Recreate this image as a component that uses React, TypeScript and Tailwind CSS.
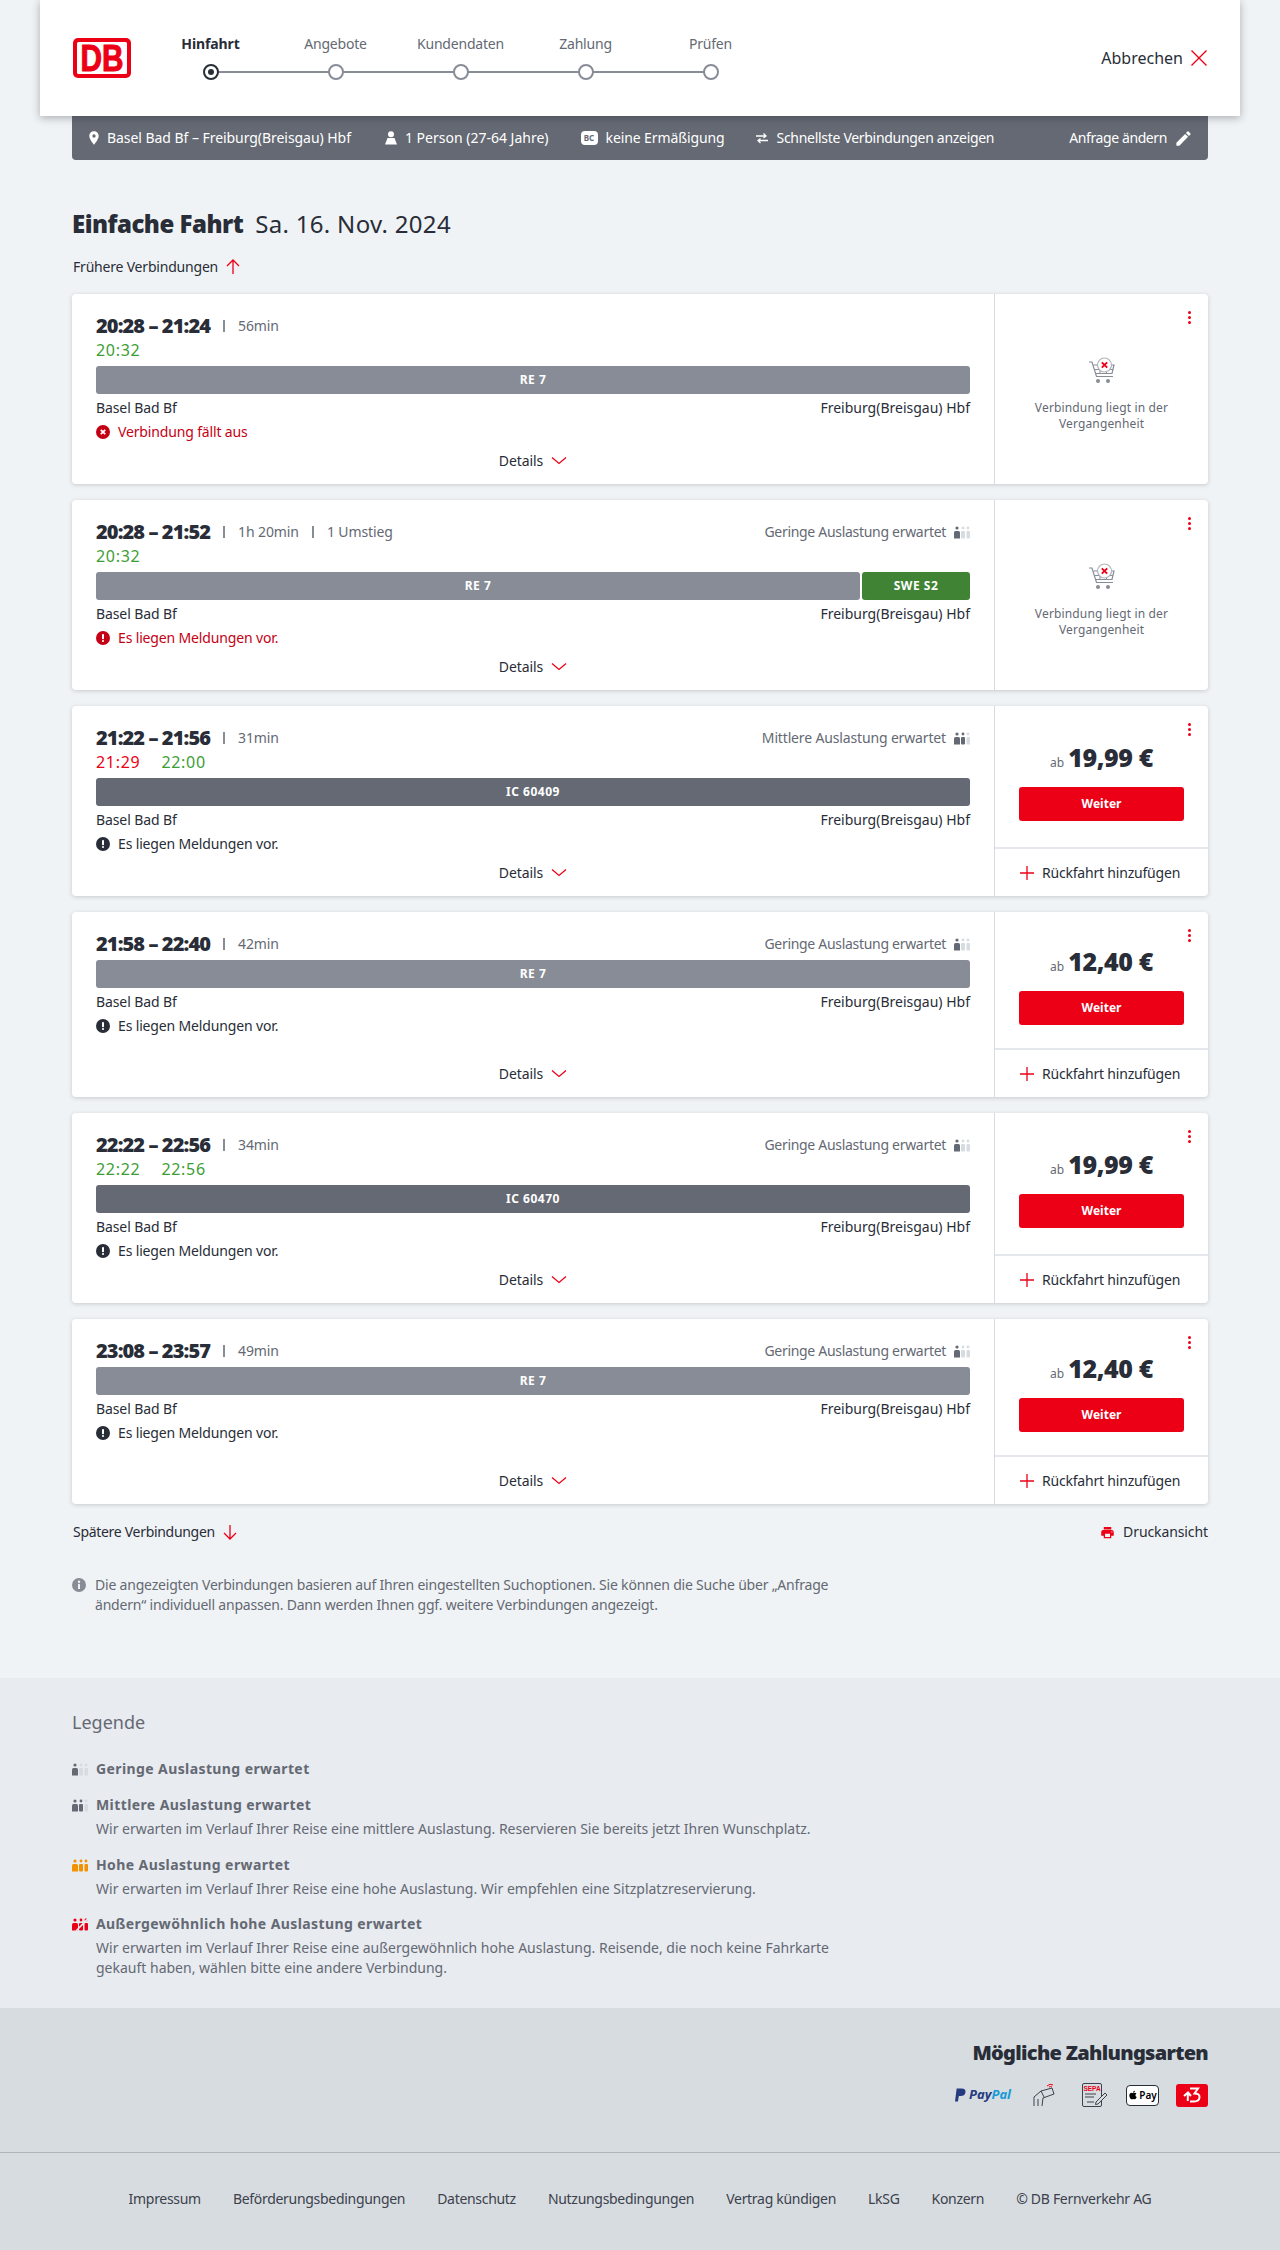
import { MdEdit, MdLocationOn, MdPrint } from "react-icons/md";
import { FaApple } from "react-icons/fa";

const steps = ["Hinfahrt", "Angebote", "Kundendaten", "Zahlung", "Prüfen"];

const footerLinks = [
  "Impressum",
  "Beförderungsbedingungen",
  "Datenschutz",
  "Nutzungsbedingungen",
  "Vertrag kündigen",
  "LkSG",
  "Konzern",
  "© DB Fernverkehr AG",
];

type Trip = {
  time: string;
  duration: string;
  change?: string;
  delays?: { text: string; late?: boolean }[];
  load?: "Geringe" | "Mittlere";
  segments: { name: string; tone: string; width: string }[];
  message: string;
  alert?: "cancel" | "warn";
  price?: string;
  short?: boolean;
};

const trips: Trip[] = [
  {
    time: "20:28 – 21:24",
    duration: "56min",
    delays: [{ text: "20:32" }],
    segments: [{ name: "RE 7", tone: "bg-[#878c96]", width: "flex-1" }],
    message: "Verbindung fällt aus",
    alert: "cancel",
  },
  {
    time: "20:28 – 21:52",
    duration: "1h 20min",
    change: "1 Umstieg",
    delays: [{ text: "20:32" }],
    load: "Geringe",
    segments: [
      { name: "RE 7", tone: "bg-[#878c96]", width: "flex-1" },
      { name: "SWE S2", tone: "bg-[#408335]", width: "w-[108px]" },
    ],
    message: "Es liegen Meldungen vor.",
    alert: "warn",
  },
  {
    time: "21:22 – 21:56",
    duration: "31min",
    delays: [{ text: "21:29", late: true }, { text: "22:00" }],
    load: "Mittlere",
    segments: [{ name: "IC 60409", tone: "bg-[#646973]", width: "flex-1" }],
    message: "Es liegen Meldungen vor.",
    price: "19,99 €",
  },
  {
    time: "21:58 – 22:40",
    duration: "42min",
    load: "Geringe",
    segments: [{ name: "RE 7", tone: "bg-[#878c96]", width: "flex-1" }],
    message: "Es liegen Meldungen vor.",
    price: "12,40 €",
    short: true,
  },
  {
    time: "22:22 – 22:56",
    duration: "34min",
    delays: [{ text: "22:22" }, { text: "22:56" }],
    load: "Geringe",
    segments: [{ name: "IC 60470", tone: "bg-[#646973]", width: "flex-1" }],
    message: "Es liegen Meldungen vor.",
    price: "19,99 €",
  },
  {
    time: "23:08 – 23:57",
    duration: "49min",
    load: "Geringe",
    segments: [{ name: "RE 7", tone: "bg-[#878c96]", width: "flex-1" }],
    message: "Es liegen Meldungen vor.",
    price: "12,40 €",
    short: true,
  },
];

function LoadIcon({ colors, slash }: { colors: string[]; slash?: boolean }) {
  return (
    <svg width="16" height="13" viewBox="0 0 16 13" className="shrink-0">
      <circle cx="3" cy="2" r="1.6" fill={colors[0]} />
      <path d="M0 6.5 Q0 5 1.5 5 H4.5 Q6 5 6 6.5 V12.5 H0 Z" fill={colors[0]} />
      <circle cx="9" cy="2" r="1.4" fill={colors[1]} />
      <rect x="7" y="5" width="4" height="7.5" rx="1" fill={colors[1]} />
      <circle cx="14" cy="2" r="1.4" fill={colors[2]} />
      <rect x="12.5" y="5" width="3.5" height="7.5" rx="1" fill={colors[2]} />
      {slash && <path d="M4 13 L15.5 1" stroke="#e8ebf0" strokeWidth="1.6" />}
    </svg>
  );
}

const loadColors = {
  Geringe: ["#646973", "#d7dce1", "#d7dce1"],
  Mittlere: ["#646973", "#646973", "#d7dce1"],
  Hohe: ["#f39200", "#f39200", "#f39200"],
  Hoch: ["#ec0016", "#ec0016", "#ec0016"],
};

function CartIcon() {
  return (
    <svg width="28" height="28" viewBox="0 0 28 28" fill="none" className="shrink-0">
      <path d="M1 5 H4 L8.5 19.5 H25" stroke="#878c96" strokeWidth="1.2" />
      <path d="M5.5 8 H26 L24 16.5 H8" stroke="#878c96" strokeWidth="1.2" />
      <path d="M7 12.5 H25 M12 8 V16.5 M18.5 8 V16.5" stroke="#878c96" strokeWidth="1" />
      <circle cx="10" cy="24" r="2" fill="#878c96" />
      <circle cx="20" cy="24" r="2" fill="#878c96" />
      <circle cx="16.5" cy="8" r="7" fill="#fff" stroke="#afb4bb" strokeWidth="1.2" />
      <path d="M13.8 5.3 L19.2 10.7 M19.2 5.3 L13.8 10.7" stroke="#ec0016" strokeWidth="1.8" />
    </svg>
  );
}

function AlertIcon({ kind, color }: { kind: "cancel" | "warn"; color: string }) {
  return (
    <svg width="14" height="14" viewBox="0 0 14 14" className="shrink-0">
      <circle cx="7" cy="7" r="7" fill={color} />
      {kind === "cancel" ? (
        <path d="M4.8 4.8 L9.2 9.2 M9.2 4.8 L4.8 9.2" stroke="#fff" strokeWidth="1.8" />
      ) : (
        <>
          <rect x="6" y="3" width="2" height="5.2" rx="0.8" fill="#fff" />
          <circle cx="7" cy="10" r="1.1" fill="#fff" />
        </>
      )}
    </svg>
  );
}

function Chevron() {
  return (
    <svg width="16" height="16" viewBox="0 0 16 16" fill="none" className="shrink-0">
      <path d="M1 4.5 L8 10.5 L15 4.5" stroke="#ec0016" strokeWidth="1.3" />
    </svg>
  );
}

function Arrow({ up }: { up?: boolean }) {
  return (
    <svg width="14" height="16" viewBox="0 0 14 16" fill="none" className="shrink-0">
      {up ? (
        <path d="M7 15 V1 M1 7 L7 1 L13 7" stroke="#ec0016" strokeWidth="1.3" />
      ) : (
        <path d="M7 1 V15 M1 9 L7 15 L13 9" stroke="#ec0016" strokeWidth="1.3" />
      )}
    </svg>
  );
}

function TripCard({ trip }: { trip: Trip }) {
  const failed = trip.alert != null;
  return (
    <div
      className={`relative flex bg-white rounded shadow-[0_1px_4px_rgba(40,45,55,0.2)] ${
        trip.short ? "h-[185px]" : "h-[190px]"
      }`}
    >
      <div className="flex flex-col w-[923px] shrink-0 px-6 pt-4 pb-[13px] border-r border-[#d7dce1]">
        <div className="flex items-center h-8 text-sm tracking-[-0.1px] text-[#646973]">
          <span className="font-black text-xl tracking-[-0.9px] text-[#282d37]">{trip.time}</span>
          <span className="w-0.5 h-3 bg-[#878c96] mx-[13px]" />
          <span>{trip.duration}</span>
          {trip.change && (
            <>
              <span className="w-0.5 h-3 bg-[#878c96] mx-[13px]" />
              <span>{trip.change}</span>
            </>
          )}
          {trip.load && (
            <span className={`ml-auto flex items-center gap-2 ${trip.load === "Mittlere" ? "tracking-[-0.15px]" : "tracking-[-0.3px]"}`}>
              {trip.load} Auslastung erwartet
              <LoadIcon colors={loadColors[trip.load]} />
            </span>
          )}
        </div>
        {trip.delays && (
          <div className="flex gap-[21px] h-6 pb-2 leading-4 text-base tracking-[0.7px]">
            {trip.delays.map((d) => (
              <span key={d.text} className={d.late ? "text-[#ec0016]" : "text-[#3c9e35]"}>
                {d.text}
              </span>
            ))}
          </div>
        )}
        <div className="flex gap-0.5 h-7">
          {trip.segments.map((s) => (
            <div
              key={s.name}
              className={`${s.width} ${s.tone} rounded-[3px] flex items-center justify-center text-xs font-bold text-white tracking-[0.5px]`}
            >
              {s.name}
            </div>
          ))}
        </div>
        <div className="flex justify-between items-center h-7 text-sm text-[#282d37]">
          <span className="tracking-[-0.1px]">Basel Bad Bf</span>
          <span>Freiburg(Breisgau) Hbf</span>
        </div>
        <div
          className={`flex items-center gap-2 h-5 text-sm tracking-[-0.15px] ${failed ? "text-[#c50014]" : "text-[#282d37]"}`}
        >
          <AlertIcon kind={trip.alert === "cancel" ? "cancel" : "warn"} color={failed ? "#c50014" : "#282d37"} />
          {trip.message}
        </div>
        <div className="mt-auto flex items-center justify-center gap-2 h-5 text-sm tracking-[-0.1px] text-[#282d37]">
          Details
          <Chevron />
        </div>
      </div>

      {trip.price ? (
        <div className="flex flex-col flex-1">
          <div className="flex-1 flex flex-col items-center justify-center">
            <div className="flex items-baseline gap-[4px] h-[55px] text-[#282d37]">
              <span className="text-xs text-[#646973]">ab</span>
              <span className="font-black text-[25px] leading-[50px] tracking-[-0.4px]">{trip.price}</span>
            </div>
            <div className="w-[165px] h-[34px] rounded-[3px] bg-[#ec0016] flex items-center justify-center text-xs font-bold text-white">
              Weiter
            </div>
          </div>
          <div className="flex items-center gap-2 h-[49px] pl-[25px] border-t-2 border-[#e4e7eb] text-sm tracking-[-0.2px] text-[#282d37]">
            <svg width="14" height="14" viewBox="0 0 14 14" fill="none">
              <path d="M7 0 V14 M0 7 H14" stroke="#ec0016" strokeWidth="1.3" />
            </svg>
            Rückfahrt hinzufügen
          </div>
        </div>
      ) : (
        <div className="flex flex-col flex-1 items-center pt-[63px] text-center text-xs leading-4 text-[#646973] tracking-[0.15px]">
          <CartIcon />
          <p className="mt-[15px] w-[150px]">Verbindung liegt in der Vergangenheit</p>
        </div>
      )}

      <div className="absolute top-[17px] right-[17px] flex flex-col gap-[2px]">
        <span className="w-[3px] h-[3px] rounded-full bg-[#ec0016]" />
        <span className="w-[3px] h-[3px] rounded-full bg-[#ec0016]" />
        <span className="w-[3px] h-[3px] rounded-full bg-[#ec0016]" />
      </div>
    </div>
  );
}

function LegendRow({
  title,
  colors,
  text,
  slash,
  className = "",
}: {
  title: string;
  colors: string[];
  text?: string;
  slash?: boolean;
  className?: string;
}) {
  return (
    <div className={`flex gap-2 text-sm leading-5 text-[#646973] ${className}`}>
      <div className="w-4 pt-1 shrink-0">
        <LoadIcon colors={colors} slash={slash} />
      </div>
      <div className="w-[740px]">
        <h3 className="font-bold tracking-[0.4px]">{title}</h3>
        {text && <p className="mt-1">{text}</p>}
      </div>
    </div>
  );
}

export default function App() {
  return (
    <div className="h-[2250px] flex flex-col bg-[#f0f3f5] font-['Noto_Sans',sans-serif] text-[#282d37]">
      <header className="relative z-10 mx-10 h-[116px] shrink-0 bg-white flex items-center pl-[33px] pr-[33px] shadow-[0_2px_8px_rgba(40,45,55,0.35)]">
        <svg width="58" height="40" viewBox="0 0 58 40" className="shrink-0">
          <rect width="58" height="40" rx="5" fill="#ec0016" />
          <rect x="4" y="4" width="50" height="32" rx="1.5" fill="#fff" />
          <text
            x="29"
            y="33"
            textAnchor="middle"
            fontFamily="Liberation Sans"
            fontWeight="700"
            fontSize="36"
            fill="#ec0016"
            stroke="#ec0016"
            strokeWidth="1"
            textLength="43"
            lengthAdjust="spacingAndGlyphs"
          >
            DB
          </text>
        </svg>
        <div className="ml-[17px] mt-[-2px] w-[625px] flex">
          {steps.map((s, i) => (
            <div key={s} className="relative w-[125px] flex flex-col items-center gap-[10px]">
              <span className={`text-sm leading-5 ${i === 0 ? "font-bold text-[#282d37] tracking-[-0.1px]" : "text-[#646973] tracking-[-0.2px]"}`}>{s}</span>
              {i < 4 && <span className="absolute top-[37px] left-[62px] w-[125px] h-0.5 bg-[#878c96]" />}
              <span
                className={`relative w-4 h-4 rounded-full bg-white border-2 flex items-center justify-center ${
                  i === 0 ? "border-[#282d37]" : "border-[#878c96]"
                }`}
              >
                {i === 0 && <span className="w-1.5 h-1.5 rounded-full bg-[#282d37]" />}
              </span>
            </div>
          ))}
        </div>
        <div className="ml-auto flex items-center gap-2 text-base text-[#282d37]">
          Abbrechen
          <svg width="16" height="16" viewBox="0 0 16 16" fill="none">
            <path d="M0.5 0.5 L15.5 15.5 M15.5 0.5 L0.5 15.5" stroke="#ec0016" strokeWidth="1.4" />
          </svg>
        </div>
      </header>

      <div className="mx-[72px] h-11 shrink-0 bg-[#646973] rounded-b flex items-center pl-[14px] pr-[15px] text-sm text-white">
        <MdLocationOn className="text-[16px]" />
        <span className="ml-[5px] tracking-[-0.05px]">Basel Bad Bf – Freiburg(Breisgau) Hbf</span>
        <svg width="12" height="14" viewBox="0 0 12 14" className="ml-[34px]" fill="#fff">
          <circle cx="6" cy="3.2" r="3" />
          <path d="M2.5 7 H9.5 L12 13.5 H0 Z" />
        </svg>
        <span className="ml-[8px]">1 Person (27-64 Jahre)</span>
        <div className="ml-[32px] w-[17px] h-[14px] bg-white rounded-sm flex items-center justify-center text-[8px] font-bold text-[#646973]">BC</div>
        <span className="ml-[8px] tracking-[-0.1px]">keine Ermäßigung</span>
        <svg width="12" height="12" viewBox="0 0 12 12" className="ml-[31px]" fill="none" stroke="#fff" strokeWidth="1.3">
          <path d="M0 4 H10 M7.5 1.5 L10 4 L7.5 6 M12 8.5 H2 M4.5 6.5 L2 8.5 L4.5 11" />
        </svg>
        <span className="ml-[9px] tracking-[-0.3px]">Schnellste Verbindungen anzeigen</span>
        <span className="ml-auto tracking-[-0.4px]">Anfrage ändern</span>
        <MdEdit className="ml-[7px] text-[19px]" />
      </div>

      <main className="px-[72px] shrink-0">
        <h1 className="mt-[48px] flex items-center gap-3 h-8 text-2xl text-[#282d37]">
          <span className="font-black tracking-[-0.5px]">Einfache Fahrt</span>
          <span className="tracking-[0.3px]">Sa. 16. Nov. 2024</span>
        </h1>
        <div className="mt-[17px] h-5 flex items-center gap-2 pl-px text-sm tracking-[-0.2px]">
          Frühere Verbindungen
          <Arrow up />
        </div>

        <div className="mt-[17px] flex flex-col gap-4">
          {trips.map((t) => (
            <TripCard key={t.time} trip={t} />
          ))}
        </div>

        <div className="mt-[18px] h-5 flex items-center pl-px text-sm">
          <span className="tracking-[-0.3px]">Spätere Verbindungen</span>
          <span className="ml-2">
            <Arrow />
          </span>
          <MdPrint className="ml-auto text-[15px] text-[#ec0016]" />
          <span className="ml-[8px] tracking-[-0.1px]">Druckansicht</span>
        </div>

        <div className="mt-[33px] flex gap-[9px] text-sm leading-5 tracking-[-0.2px] text-[#646973]">
          <svg width="14" height="14" viewBox="0 0 14 14" className="mt-[3px] shrink-0">
            <circle cx="7" cy="7" r="7" fill="#878c96" />
            <circle cx="7" cy="3.8" r="1.2" fill="#f0f3f5" />
            <rect x="6" y="5.8" width="2" height="5.2" rx="0.6" fill="#f0f3f5" />
          </svg>
          <p className="w-[745px]">
            Die angezeigten Verbindungen basieren auf Ihren eingestellten Suchoptionen. Sie können die Suche über „Anfrage
            ändern“ individuell anpassen. Dann werden Ihnen ggf. weitere Verbindungen angezeigt.
          </p>
        </div>
      </main>

      <section className="mt-[63px] h-[330px] shrink-0 bg-[#e8ebf0] px-[72px] pt-[30px]">
        <h2 className="h-7 leading-7 text-lg text-[#646973]">Legende</h2>
        <div className="mt-[23px] flex flex-col gap-[16px]">
          <LegendRow title="Geringe Auslastung erwartet" colors={loadColors.Geringe} />
          <LegendRow
            title="Mittlere Auslastung erwartet"
            colors={loadColors.Mittlere}
            text="Wir erwarten im Verlauf Ihrer Reise eine mittlere Auslastung. Reservieren Sie bereits jetzt Ihren Wunschplatz."
          />
          <LegendRow
            title="Hohe Auslastung erwartet"
            colors={loadColors.Hohe}
            text="Wir erwarten im Verlauf Ihrer Reise eine hohe Auslastung. Wir empfehlen eine Sitzplatzreservierung."
          />
          <LegendRow
            title="Außergewöhnlich hohe Auslastung erwartet"
            colors={loadColors.Hoch}
            slash
            className="-mt-px"
            text="Wir erwarten im Verlauf Ihrer Reise eine außergewöhnlich hohe Auslastung. Reisende, die noch keine Fahrkarte gekauft haben, wählen bitte eine andere Verbindung."
          />
        </div>
      </section>

      <section className="flex-1 bg-[#d7dce1] flex flex-col">
        <div className="h-[145px] shrink-0 px-[72px] pt-[31px] flex flex-col items-end border-b border-[#afb4bb]">
          <h2 className="h-7 leading-7 text-xl font-black tracking-[-0.7px] text-[#282d37]">Mögliche Zahlungsarten</h2>
          <div className="mt-[16px] flex items-center">
            <div className="flex items-center gap-[3px] italic font-bold text-[13px]">
              <svg width="11" height="14" viewBox="0 0 10 12">
                <path d="M1.5 0 H6 Q10 0 9.5 3.5 Q9 7 5 7 H3.5 L2.7 12 H0 Z" fill="#253b80" />
              </svg>
              <span className="text-[#253b80]">Pay</span>
              <span className="text-[#179bd7] -ml-[3px]">Pal</span>
            </div>
            <svg width="22" height="24" viewBox="0 0 22 24" fill="none" stroke="#3c414b" strokeWidth="1" className="ml-[22px]">
              <path d="M1 23 V14 L8 8 L19 5 L21 11 L10 15 L9 23 M5 23 V16 M8 8 L11 14" />
              <path d="M14 3 Q17 0 20 2 M16 4 Q17.5 3 19 4" stroke="#ec0016" />
            </svg>
            <svg width="26" height="24" viewBox="0 0 26 24" fill="none" className="ml-[27px]">
              <rect x="0.5" y="0.5" width="19" height="23" rx="1.5" stroke="#3c414b" />
              <text x="10" y="7.5" textAnchor="middle" fontSize="6.5" fontWeight="700" fill="#ec0016" fontFamily="Liberation Sans">SEPA</text>
              <path d="M3 11 H14 M3 14 H12 M5 19 H12" stroke="#3c414b" />
              <path d="M14 19 L23 10 L25 12 L16 21 L13.5 21.5 Z" fill="#d7dce1" stroke="#3c414b" />
            </svg>
            <div className="ml-[18px] w-[33px] h-[21px] bg-white border border-[#282d37] rounded-sm flex items-center justify-center gap-px text-[10px] font-semibold text-black">
              <FaApple className="text-[10px]" />
              Pay
            </div>
            <div className="ml-[17px] w-8 h-[23px] bg-[#ec0016] rounded-[3px] flex items-center justify-center text-white">
              <svg width="18" height="16" viewBox="0 0 18 16" fill="none" stroke="#fff" strokeWidth="2">
                <path d="M7 1.5 H15 L11.5 6.5 Q17 6.5 16.5 10.5 Q16 14.5 11 14.5 H7" />
                <path d="M1 9 L5 5.5 L8 9 M4.8 6 V14" />
              </svg>
            </div>
          </div>
        </div>
        <div className="flex justify-center gap-8 pt-[36px] text-sm leading-5 tracking-[-0.3px] text-[#3c414b]">
          {footerLinks.map((l) => (
            <span key={l}>{l}</span>
          ))}
        </div>
      </section>
    </div>
  );
}
